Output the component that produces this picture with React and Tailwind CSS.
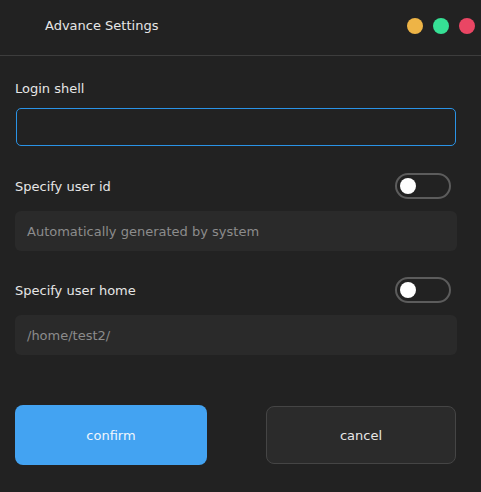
import { useState } from 'react'

const Toggle = ({ on, onChange }) => (
  <button
    onClick={() => onChange(!on)}
    className="flex h-[26px] w-[56px] items-center rounded-full border-2 border-[#5c5c5c] px-[3px]"
  >
    <span className="h-[16px] w-[16px] rounded-full bg-white" />
  </button>
)

export default function App() {
  const [uid, setUid] = useState(false)
  const [home, setHome] = useState(false)

  return (
    <div
      className="h-[492px] w-[481px] bg-[#222222] text-[13px] text-[#e6e6e6]"
      style={{ fontFamily: '"DejaVu Sans", "Noto Sans", sans-serif' }}
    >
      <div className="flex h-[56px] items-center justify-between border-b border-[#3d3d3d] pl-[45px] pr-[6px]">
        <span className="-mt-[4px]">Advance Settings</span>
        <div className="-mt-[4px] flex gap-[10px]">
          <span className="h-[16px] w-[16px] rounded-full bg-[#eeb446]" />
          <span className="h-[16px] w-[16px] rounded-full bg-[#36e095]" />
          <span className="h-[16px] w-[16px] rounded-full bg-[#ea4664]" />
        </div>
      </div>

      <div className="px-[15px] pt-[24px]">
        <p className="leading-[18px]">Login shell</p>
        <input
          className="mt-[10px] ml-[1px] block h-[38px] w-[440px] rounded-[5px] border border-[#2a93e6] bg-transparent px-3 outline-none"
        />

        <div className="mt-[27px] flex h-[26px] items-center justify-between pr-[15px]">
          <span className="pt-[2px]">Specify user id</span>
          <Toggle on={uid} onChange={setUid} />
        </div>
        <div className="mt-[12px] flex h-[40px] w-[442px] items-center rounded-[6px] bg-[#2a2a2a] px-[12px] pt-[2px] text-[#8c8c8c]">
          Automatically generated by system
        </div>

        <div className="mt-[26px] flex h-[26px] items-center justify-between pr-[15px]">
          <span className="pt-[2px]">Specify user home</span>
          <Toggle on={home} onChange={setHome} />
        </div>
        <div className="mt-[12px] flex h-[40px] w-[442px] items-center rounded-[6px] bg-[#2a2a2a] px-[12px] pt-[2px] text-[#8c8c8c]">
          /home/test2/
        </div>

        <div className="mt-[50px] flex items-center">
          <button className="h-[60px] w-[192px] rounded-[8px] bg-[#43a3f2] pt-[2px] text-[#f0f6fc]">confirm</button>
          <button className="ml-[59px] h-[58px] w-[190px] rounded-[8px] border border-[#454545] bg-[#2b2b2b] pt-[2px] text-[#e6e6e6]">
            cancel
          </button>
        </div>
      </div>
    </div>
  )
}
